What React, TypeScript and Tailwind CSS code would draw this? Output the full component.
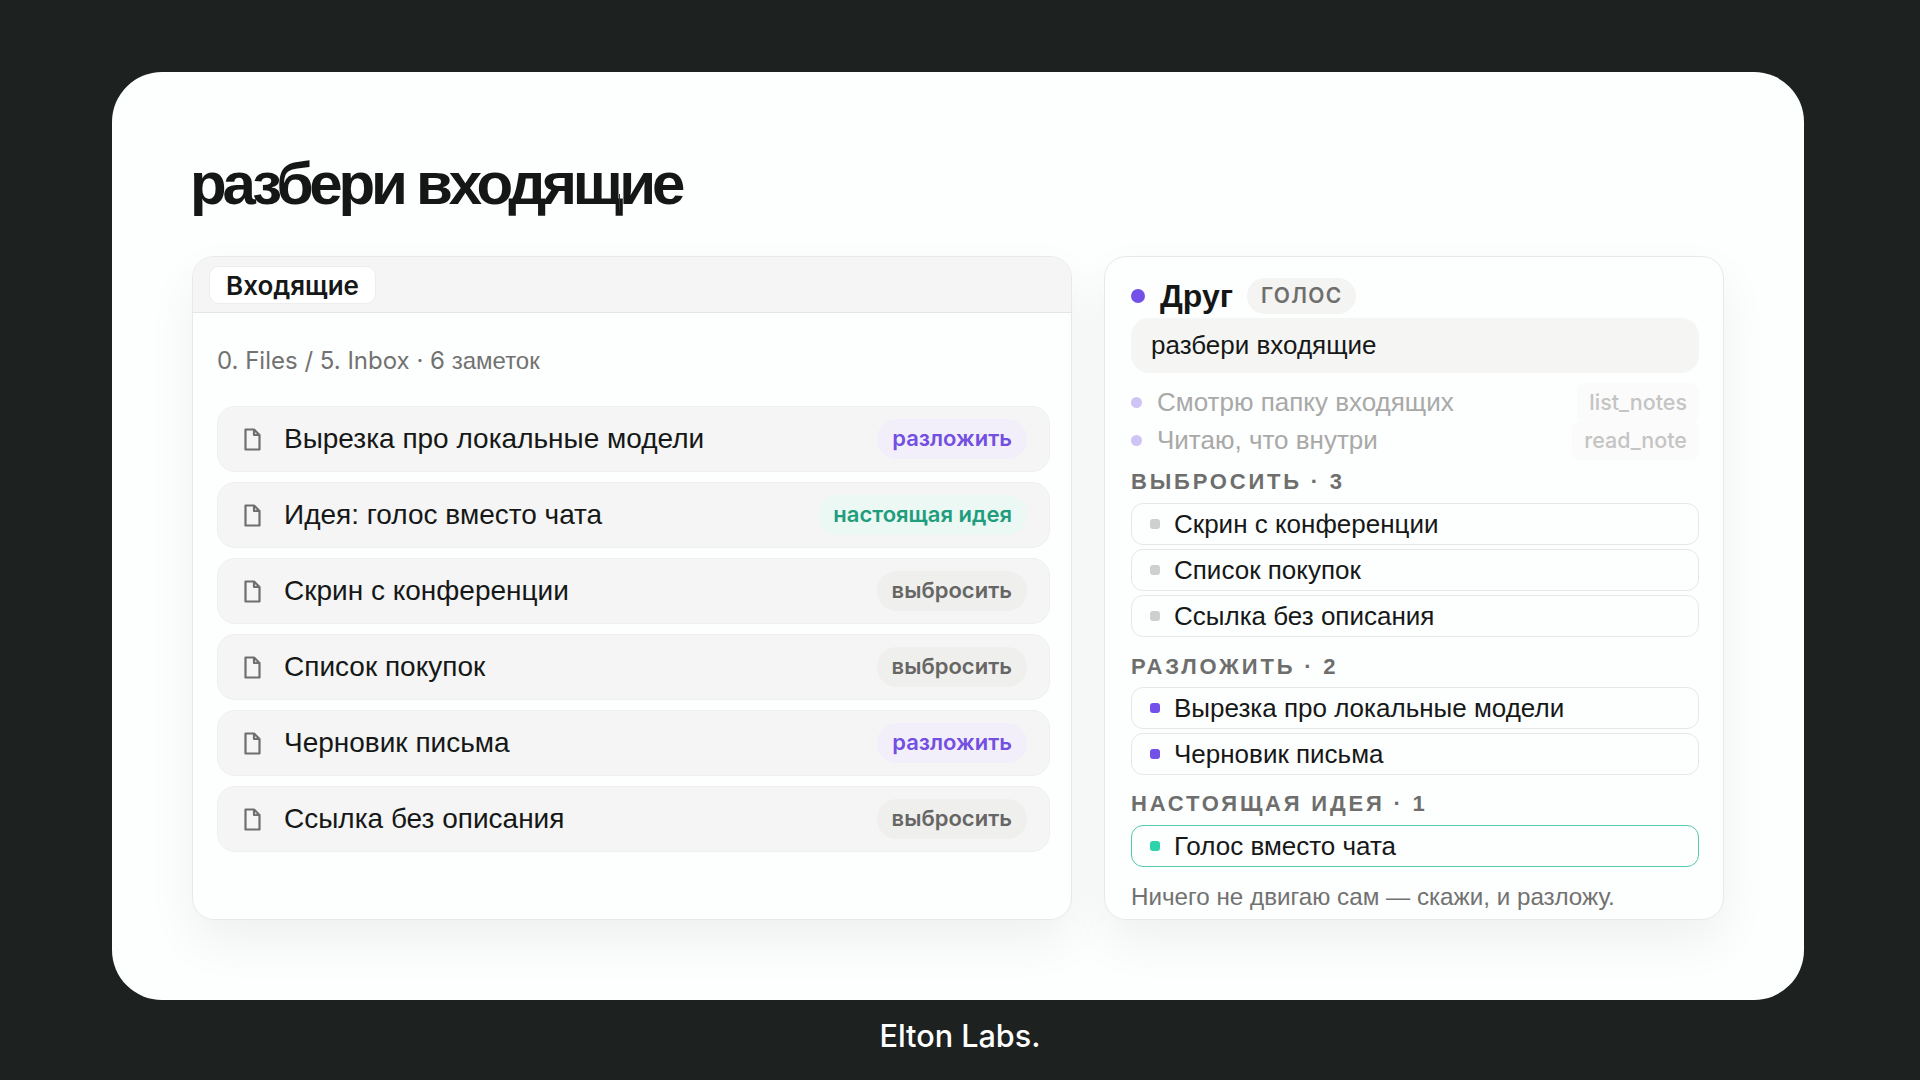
type Tone = "sort" | "idea" | "drop";

const notes: { title: string; tone: Tone }[] = [
  { title: "Вырезка про локальные модели", tone: "sort" },
  { title: "Идея: голос вместо чата", tone: "idea" },
  { title: "Скрин с конференции", tone: "drop" },
  { title: "Список покупок", tone: "drop" },
  { title: "Черновик письма", tone: "sort" },
  { title: "Ссылка без описания", tone: "drop" },
];

const badge: Record<Tone, { label: string; className: string }> = {
  sort: { label: "разложить", className: "bg-[#f2effb] text-[#7350e0]" },
  idea: { label: "настоящая идея", className: "bg-[#ebf8f4] text-[#1f9d7d]" },
  drop: { label: "выбросить", className: "bg-[#efefee] text-[#666665]" },
};

function FileIcon() {
  return (
    <svg viewBox="0 0 17 23" className="h-[23px] w-[17px] shrink-0 text-[#6f6f6f]" fill="none" stroke="currentColor" strokeWidth="2.2" strokeLinejoin="round">
      <path d="M1.5 1.5h8.5l5.5 5.5v14.5h-14Z" />
      <path d="M10 1.5V7h5.5" />
    </svg>
  );
}

function NoteRow({ title, tone }: { title: string; tone: Tone }) {
  return (
    <div className="flex h-[66px] items-center rounded-[18px] border border-[#eeefee] bg-[#f4f5f4] pl-[26px] pr-[22px]">
      <FileIcon />
      <span className="ml-[23px] flex-1 font-['Liberation_Sans',sans-serif] text-[28px] text-[#161818]">{title}</span>
      <span className={`-mt-px flex h-[40px] items-center rounded-full px-[15px] text-[22px] font-semibold ${badge[tone].className}`}>
        {badge[tone].label}
      </span>
    </div>
  );
}

function Step({ text, tool }: { text: string; tool: string }) {
  return (
    <div className="flex h-[38px] items-center">
      <span className="size-[11px] rounded-full bg-[#cfc4f5]" />
      <span className="ml-[15px] flex-1 font-['Liberation_Sans',sans-serif] text-[26px] text-[#a9a9a8]">{text}</span>
      <span className="mt-px rounded-[8px] bg-[#fbfbfb] px-[12px] py-[3px] text-[21.5px] font-medium text-[#c4c4c3]">{tool}</span>
    </div>
  );
}

function SortedItem({ text, dot, border = "border-[#e6e7e6]" }: { text: string; dot: string; border?: string }) {
  return (
    <div className={`flex h-[42px] items-center rounded-[12px] border bg-[#fdfefe] pl-[18px] ${border}`}>
      <span className={`h-[10px] w-[10px] rounded-[3px] ${dot}`} />
      <span className="ml-[14px] font-['Liberation_Sans',sans-serif] text-[26px] text-[#161818]">{text}</span>
    </div>
  );
}

function Label({ children, className = "" }: { children: string; className?: string }) {
  return (
    <div className={`font-['Liberation_Sans',sans-serif] text-[22px] font-bold leading-[28px] tracking-[2.8px] text-[#6e6e6d] ${className}`}>
      {children}
    </div>
  );
}

export default function App() {
  return (
    <div className="flex h-[1080px] w-[1920px] flex-col overflow-hidden bg-[#1d2120] font-['Inter',sans-serif]">
      <div className="ml-[112px] mt-[72px] h-[928px] w-[1692px] rounded-[50px] bg-[#fdfefe] px-[80px]">
        <h1 className="relative -ml-[2px] pt-[78px] font-['Liberation_Sans',sans-serif] text-[60px] font-bold leading-[68px] tracking-[-4.2px] text-[#151717]">
          разбери входящие
          <span className="absolute left-[429px] top-[122px] h-[16px] w-px bg-[#333]" />
        </h1>
        <div className="mt-[38px] flex gap-[32px]">
          <section className="flex h-[664px] w-[880px] flex-col overflow-hidden rounded-[22px] border border-[#e8e9e8] bg-[#fdfefe] shadow-[0_22px_50px_rgba(0,0,0,0.06)]">
            <div className="flex h-[56px] items-start border-b border-[#e4e5e4] bg-[#f4f5f4] pl-[16px] pt-[9px]">
              <span className="flex h-[38px] items-center rounded-[10px] border border-[#eceded] bg-white px-[16px] text-[26px] font-semibold text-[#161818]">
                Входящие
              </span>
            </div>
            <div className="flex flex-col pl-[24px] pr-[21px]">
              <div className="mt-[32px] text-[24px] leading-[32px] text-[#727271]">
                0. Files / 5. Inbox · 6 <span className="font-['Liberation_Sans',sans-serif]">заметок</span>
              </div>
              <div className="mt-[29px] flex flex-col gap-[10px]">
                {notes.map((note) => (
                  <NoteRow key={note.title} {...note} />
                ))}
              </div>
            </div>
          </section>
          <section className="flex h-[664px] w-[620px] flex-col rounded-[22px] border border-[#e8e9e8] bg-[#fdfefe] pl-[26px] pr-[24px] shadow-[0_22px_50px_rgba(0,0,0,0.06)]">
            <div className="mt-[19px] flex h-[40px] items-center">
              <span className="size-[14px] rounded-full bg-[#7350e8]" />
              <span className="ml-[15px] font-['Liberation_Sans',sans-serif] text-[32px] font-bold text-[#151717]">Друг</span>
              <span className="ml-[14px] flex h-[36px] items-center rounded-full bg-[#f4f4f3] px-[14px] text-[21px] font-semibold tracking-[0.06em] text-[#6e6e6d]">
                ГОЛОС
              </span>
            </div>
            <div className="mt-[2px] flex h-[55px] items-center rounded-[18px] bg-[#f5f5f4] px-[20px] font-['Liberation_Sans',sans-serif] text-[26px] text-[#161818]">
              разбери входящие
            </div>
            <div className="mt-[10px]">
              <Step text="Смотрю папку входящих" tool="list_notes" />
              <Step text="Читаю, что внутри" tool="read_note" />
            </div>
            <Label className="mt-[9px]">ВЫБРОСИТЬ · 3</Label>
            <div className="mt-[7px] flex flex-col gap-[4px]">
              <SortedItem text="Скрин с конференции" dot="bg-[#cfcfcf]" />
              <SortedItem text="Список покупок" dot="bg-[#cfcfcf]" />
              <SortedItem text="Ссылка без описания" dot="bg-[#cfcfcf]" />
            </div>
            <Label className="mt-[16px]">РАЗЛОЖИТЬ · 2</Label>
            <div className="mt-[6px] flex flex-col gap-[4px]">
              <SortedItem text="Вырезка про локальные модели" dot="bg-[#7350e8]" />
              <SortedItem text="Черновик письма" dot="bg-[#7350e8]" />
            </div>
            <Label className="mt-[15px]">НАСТОЯЩАЯ ИДЕЯ · 1</Label>
            <div className="mt-[7px]">
              <SortedItem text="Голос вместо чата" dot="bg-[#2fd3ab]" border="border-[#54c9ab]" />
            </div>
            <div className="mt-[14px] font-['Liberation_Sans',sans-serif] text-[24.2px] leading-[32px] text-[#727271]">
              Ничего не двигаю сам — скажи, и разложу.
            </div>
          </section>
        </div>
      </div>
      <div className="mt-[13px] text-center text-[30.6px] font-medium text-white">Elton Labs.</div>
    </div>
  );
}
